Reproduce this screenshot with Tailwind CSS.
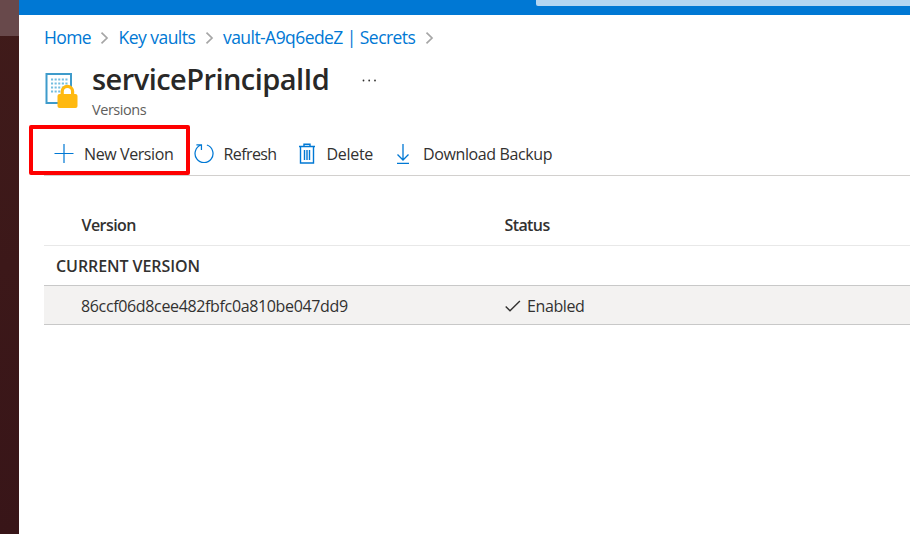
<!DOCTYPE html>
<html lang="en">
<head>
<meta charset="utf-8">
<title>servicePrincipalId</title>
<script src="https://cdn.jsdelivr.net/npm/@tailwindcss/browser@4"></script>
</head>
<body class="flex h-[534px] w-[910px] overflow-hidden bg-white font-['Open_Sans','Noto_Sans',sans-serif] text-[#323130]">
  <aside class="flex w-[19px] shrink-0 flex-col bg-linear-to-b from-[#401b1a] to-[#381518]">
    <div class="h-[36px] bg-[#68494b]"></div>
  </aside>
  <main class="flex min-w-0 flex-1 flex-col whitespace-nowrap">
    <header class="flex h-[15px] shrink-0 justify-end bg-[#0078d4]">
      <div class="h-[6px] w-[374px] rounded-bl-[2px] bg-[#b3d6f2]"></div>
    </header>

    <nav class="flex h-[46px] shrink-0 items-center pb-px pl-[25px] text-[17.5px] text-[#0078d4]">
      <a class="w-[47px] tracking-[-0.6px]">Home</a>
      <svg class="mx-[9px] h-3 w-[9px] shrink-0" viewBox="0 0 9 12" fill="none" stroke="#a6a6a6" stroke-width="1.7"><path d="M1.5 .7 7 6 1.5 11.3"/></svg>
      <a class="ml-[0.5px] w-[77.5px] tracking-[-0.53px]">Key vaults</a>
      <svg class="mx-[9px] h-3 w-[9px] shrink-0" viewBox="0 0 9 12" fill="none" stroke="#a6a6a6" stroke-width="1.7"><path d="M1.5 .7 7 6 1.5 11.3"/></svg>
      <a class="w-[193px] tracking-[-0.56px]">vault-A9q6edeZ | Secrets</a>
      <svg class="ml-[9px] h-3 w-[9px] shrink-0" viewBox="0 0 9 12" fill="none" stroke="#a6a6a6" stroke-width="1.7"><path d="M1.5 .7 7 6 1.5 11.3"/></svg>
    </nav>

    <section class="flex h-[72px] shrink-0 pl-[26px]">
      <svg class="mt-[12px] h-[36px] w-[34px]" viewBox="0 0 34 36">
        <path d="M1.500 1h24.500v29H1.500z" fill="#fff" stroke="#3e9bcb" stroke-width="2"/>
        <path d="M6 6.500h17M6 10.500h17M6 14.500h17M6 18.500h17" stroke="#74bde0" stroke-width="2" stroke-dasharray="2.100 1.500" fill="none"/>
        <path d="M17.200 22v-3.500a5.200 5.200 0 0 1 10.400 0V22" fill="#fff" stroke="#ffb910" stroke-width="3.200"/>
        <rect x="12.500" y="21" width="20" height="14" rx="2" fill="#ffb910"/>
      </svg>
      <div class="ml-[13px] w-[270px]">
        <h1 class="h-[37px] text-[29px] leading-[35px] font-semibold tracking-[-0.55px] text-[#292827]">servicePrincipalId</h1>
        <p class="h-[22px] text-[14.5px] leading-[23px] tracking-[-0.45px] text-[#605e5c]">Versions</p>
      </div>
      <svg class="mt-[18px] h-[3px] w-[14px]" viewBox="0 0 14 3" fill="#323130"><circle cx="1.500" cy="1.500" r=".9"/><circle cx="7.200" cy="1.500" r=".9"/><circle cx="13" cy="1.500" r=".9"/></svg>
    </section>

    <div class="relative ml-[25px] flex h-[43px] shrink-0 items-center border-b border-[#d2d0ce] pl-[10px] text-[16px]">
      <svg class="h-5 w-5" viewBox="0 0 20 20" fill="none" stroke="#0078d4" stroke-width="1.200"><path d="M10 0v19M.5 9.500h19"/></svg>
      <span class="ml-[10px] w-[110px] tracking-[-0.4px]">New Version</span>
      <svg class="h-[22px] w-[21px]" viewBox="0 0 22 22" fill="none" stroke="#0078d4" stroke-width="1.300"><path d="M13.500 1.600A9.400 9.400 0 1 1 7.500 1.600M2.500 1.500h5.300v5.300"/></svg>
      <span class="ml-[8.5px] w-[74.5px] tracking-[-0.6px]">Refresh</span>
      <svg class="h-[22px] w-[18px]" viewBox="0 0 18 22" fill="none" stroke="#0078d4" stroke-width="1.400"><path d="M1 3.500h16M6 3.300V1.200h6v2.100M2.500 4v16h13V4M6.500 7v10M9 7v10M11.500 7v10"/></svg>
      <span class="ml-[10.5px] w-[68.5px] tracking-[-0.3px]">Delete</span>
      <svg class="h-[22px] w-[16px]" viewBox="0 0 16 22" fill="none" stroke="#0078d4" stroke-width="1.300"><path d="M8 1v15.500M2.500 11.500l5.500 5.500 5.500-5.500M2 20.300h12"/></svg>
      <span class="ml-[12px] tracking-[-0.38px]">Download Backup</span>
      <div class="absolute top-[-8px] left-[-15px] h-[50px] w-[161px] rounded-[2px] border-4 border-[#fe0000]"></div>
    </div>

    <div class="ml-[25px] mt-[29px] text-[16px]">
      <div class="flex h-[41px] items-center border-b border-[#e8e8e8] pb-px pl-[37.500px] font-semibold">
        <span class="w-[423px] tracking-[-0.55px]">Version</span><span class="tracking-[-0.6px]">Status</span>
      </div>
      <div class="flex h-[39px] items-center pt-px pl-[12px] font-semibold"><span class="tracking-[-0.07px]">CURRENT VERSION</span></div>
      <div class="flex h-[40px] items-center border-y border-[#c8c8c8] bg-[#f3f2f1] pt-px pl-[37px]">
        <span class="w-[424px] tracking-[-0.35px]">86ccf06d8cee482fbfc0a810be047dd9</span>
        <svg class="h-3 w-4" viewBox="0 0 16 12" fill="none" stroke="#323130" stroke-width="1.400"><path d="M.7 6.500 5 10.700 14.900 1"/></svg>
        <span class="ml-[6px] tracking-[-0.4px]">Enabled</span>
      </div>
    </div>
  </main>
</body>
</html>
